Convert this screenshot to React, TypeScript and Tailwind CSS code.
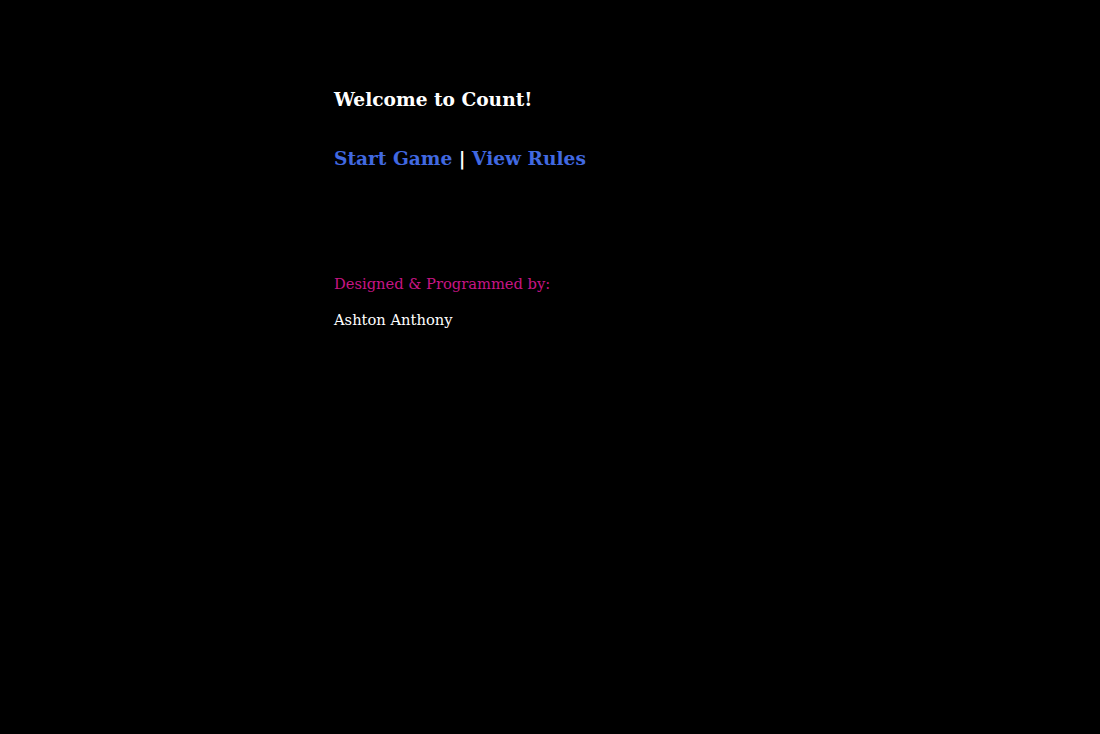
import React from "react";

export default function App() {
  return (
    <div className="min-h-[734px] w-full bg-black" style={{ fontFamily: '"DejaVu Serif", Georgia, serif' }}>
      <div className="ml-[334px] pt-[87px]">
        <h1 className="text-[18.6px] font-bold leading-[26px] text-white">Welcome to Count!</h1>
        <div className="mt-[33px] text-[18.6px] font-bold leading-[26px]">
          <a href="#" className="text-[#4169e1]">Start Game</a>
          <span className="text-white"> | </span>
          <a href="#" className="text-[#4169e1]">View Rules</a>
        </div>
        <div className="mt-[102px] text-[14.7px] leading-[20px] text-[#c71585]">Designed &amp; Programmed by:</div>
        <div className="mt-[16px] text-[14.7px] leading-[20px] text-white">Ashton Anthony</div>
      </div>
    </div>
  );
}
